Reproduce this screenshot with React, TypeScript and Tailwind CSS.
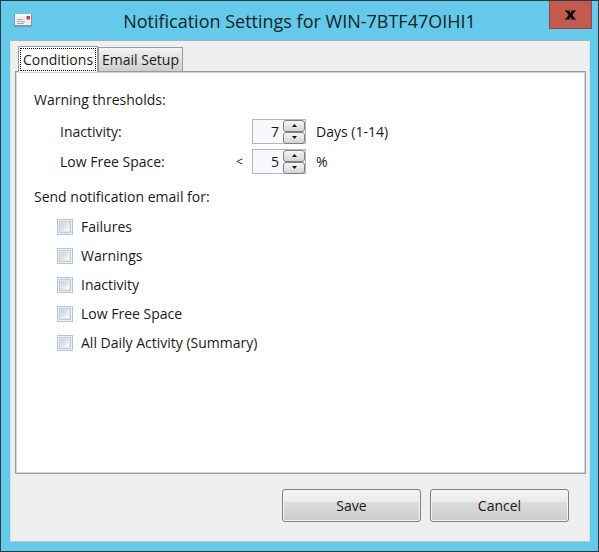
import type { ReactNode } from "react";

const notifications = [
  "Failures",
  "Warnings",
  "Inactivity",
  "Low Free Space",
  "All Daily Activity (Summary)",
];

function MailIcon() {
  return (
    <svg width="18" height="14" viewBox="0 0 18 14" aria-hidden="true">
      <rect x="0" y="1" width="18" height="13" fill="#7f93b8" />
      <rect x="1" y="1" width="16" height="11" fill="#eef1f8" />
      <rect x="1" y="1" width="16" height="2" fill="#fff" />
      <path d="M3 6.5h6M3 8.5h8M3 10.5h7" stroke="#a3abc2" strokeWidth="1" />
      <rect x="12" y="3" width="4" height="4" fill="#e9a08f" />
      <rect x="13" y="3" width="3" height="3" fill="#d4432b" />
    </svg>
  );
}

function SpinButton({ label, down }: { label: string; down?: boolean }) {
  return (
    <button
      type="button"
      aria-label={label}
      className="flex h-3 w-[22px] items-center justify-center rounded-[3px] border border-[#808080] bg-gradient-to-b from-[#f6f6f6] to-[#d4d4d4]"
    >
      <svg width="5" height="3" viewBox="0 0 5 3" aria-hidden="true">
        <path d={down ? "M0 0h5L2.5 3z" : "M0 3h5L2.5 0z"} fill="#111" />
      </svg>
    </button>
  );
}

function Threshold({
  id,
  label,
  value,
  prefix,
  children,
}: {
  id: string;
  label: string;
  value: string;
  prefix?: string;
  children: ReactNode;
}) {
  return (
    <div className="flex h-[25px] items-center">
      <label htmlFor={id} className="w-44">
        {label}
      </label>
      <span className="w-4 text-xs">{prefix}</span>
      <div className="flex h-[25px] w-[54px] items-center border border-[#b4b7c2] bg-[#f7f9fe]">
        <input
          id={id}
          type="text"
          defaultValue={value}
          className="w-0 flex-1 bg-transparent pr-1 text-right outline-none"
        />
        <div className="flex flex-col">
          <SpinButton label={`Increase ${label}`} />
          <SpinButton label={`Decrease ${label}`} down />
        </div>
      </div>
      <span className="ml-2.5">{children}</span>
    </div>
  );
}

function ActionButton({ children }: { children: ReactNode }) {
  return (
    <button
      type="button"
      className="h-[33px] w-[139px] rounded-[3px] border border-[#808080] bg-[linear-gradient(#f3f3f3,#ebebeb_38%,#dcdcdc_40%,#cdcdcd)] shadow-[inset_0_0_0_1px_#f5f5f5]"
    >
      {children}
    </button>
  );
}

export default function App() {
  return (
    <div className="flex min-h-screen flex-col border border-[#2f3b40] bg-[#65c9e9] pr-2 pb-[9px] pl-[9px] font-['Open_Sans','Noto_Sans',sans-serif] text-[14px] text-[#1a1a1a]">
      {/* Title bar */}
      <header className="flex h-[39px] items-start">
        <div className="w-7 pt-3 pl-1">
          <MailIcon />
        </div>
        <h1 className="flex-1 pt-1 pl-3 text-center text-[18px] leading-8 whitespace-nowrap text-[#14242b]">
          Notification Settings for WIN-7BTF47OIHI1
        </h1>
        <button
          type="button"
          aria-label="Close"
          className="-mr-0.5 flex h-7 w-[43px] items-center justify-center border border-t-0 border-[#8c4a48] bg-[#c35a50]"
        >
          <svg width="11" height="10" viewBox="0 0 12 10" aria-hidden="true">
            <path
              d="M0 0h5v1L6 3l1-2V0h5v1h-1L8 5l3 4h1v1H7V9L6 7 5 9v1H0V9h1l3-4-3-4H0z"
              fill="#000"
            />
          </svg>
        </button>
      </header>

      <main className="flex flex-1 flex-col border border-t-[#9db4bd] border-r-[#d5e2e7] border-b-[#b5c8cf] border-l-[#d5e2e7] bg-[#efefef] pr-[3px] pl-1">
        {/* Tabs */}
        <div role="tablist" className="flex items-end pt-[5px] pl-[3px]">
          <button
            type="button"
            role="tab"
            aria-selected="true"
            className="relative z-10 -mb-px h-[26px] w-20 border border-b-0 border-[#9799a3] bg-white p-px"
          >
            <span className="flex h-[23px] items-center justify-center border border-dotted border-black">
              Conditions
            </span>
          </button>
          <button
            type="button"
            role="tab"
            aria-selected="false"
            className="h-6 w-[85px] border border-b-0 border-[#9799a3] bg-gradient-to-b from-[#f3f3f3] to-[#cfcfcf]"
          >
            Email Setup
          </button>
        </div>

        {/* Conditions */}
        <section
          role="tabpanel"
          className="flex-1 border border-[#9799a3] bg-white px-[18px] pt-[18px] shadow-[inset_0_0_0_1px_#d5d6db]"
        >
          <h2 className="leading-5">Warning thresholds:</h2>
          <div className="mt-[9px] flex flex-col gap-[5px] pl-[26px]">
            <Threshold id="inactivity" label="Inactivity:" value="7">
              Days (1-14)
            </Threshold>
            <Threshold id="free-space" label="Low Free Space:" value="5" prefix="<">
              %
            </Threshold>
          </div>

          <h2 className="mt-[13px] leading-5">Send notification email for:</h2>
          <div className="mt-[5px] flex flex-col items-start pl-[23px]">
            {notifications.map((name) => (
              <label key={name} className="flex h-[29px] items-center gap-2">
                <input
                  type="checkbox"
                  className="size-4 appearance-none border border-[#aec4e2] bg-[linear-gradient(135deg,#b4bac4,#fafafa_75%)] shadow-[inset_0_0_0_1px_#eef2f8,inset_0_0_0_2px_#c3c9d2,inset_0_0_0_3px_#e4e7ec] checked:bg-[#5f83b5]"
                />
                {name}
              </label>
            ))}
          </div>
        </section>

        <footer className="flex justify-end gap-[9px] pt-[15px] pr-[17px] pb-[19px]">
          <ActionButton>Save</ActionButton>
          <ActionButton>Cancel</ActionButton>
        </footer>
      </main>
    </div>
  );
}
